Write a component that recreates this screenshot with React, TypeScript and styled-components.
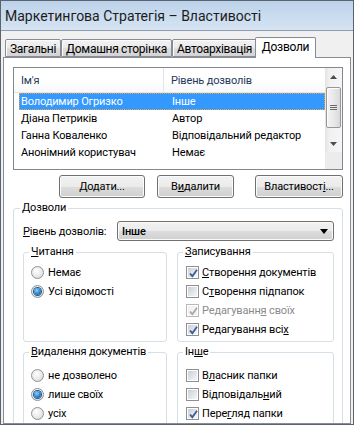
import React from "react";
import styled, { createGlobalStyle } from "styled-components";

const GlobalStyle = createGlobalStyle`
  html, body { margin: 0; padding: 0; background: #f0f0f0; }
  body { font-family: Roboto, "Noto Sans", sans-serif; font-size: 11px; letter-spacing: -0.15px; color: #000; }
  * { box-sizing: border-box; }
`;

const Window = styled.div`
  width: 354px;
  height: 425px;
  border: 1px solid #5b636c;
  background: #f0f0f0;
  display: flex;
  flex-direction: column;
  overflow: hidden;
`;

const TitleBar = styled.div`
  flex: none;
  height: 30px;
  padding-left: 4px;
  display: flex;
  align-items: center;
  background: linear-gradient(#bcd2ea, #d6e4f3);
  border-bottom: 1px solid #8d9cae;
  font-size: 14px;
  letter-spacing: 0;
  color: #1c1c1c;
  white-space: nowrap;
`;

const Body = styled.div`
  flex: 1;
  min-height: 0;
  display: flex;
  flex-direction: column;
  padding: 7px 2px 0 2px;
`;

const TabStrip = styled.div`
  display: flex;
  align-items: flex-end;
  height: 20px;
  padding-left: 2px;
  margin-bottom: -1px;
  position: relative;
  z-index: 1;
`;

const Tab = styled.div<{ $w: number; $active?: boolean }>`
  width: ${(p) => p.$w}px;
  height: ${(p) => (p.$active ? 21 : 18)}px;
  margin: ${(p) => (p.$active ? "0 -2px" : "0 0 1px 0")};
  border: 1px solid #898c95;
  border-bottom: ${(p) => (p.$active ? "none" : "1px solid #898c95")};
  border-radius: 2px 2px 0 0;
  background: ${(p) =>
    p.$active ? "#ffffff" : "linear-gradient(#f2f2f2, #ebebeb 45%, #dcdcdc 55%, #d4d4d4)"};
  box-shadow: inset 1px 1px 0 #fcfcfc;
  display: flex;
  align-items: ${(p) => (p.$active ? "flex-start" : "center")};
  padding-top: ${(p) => (p.$active ? 2 : 1)}px;
  justify-content: center;
  font-size: 12px;
  letter-spacing: -0.3px;
  white-space: nowrap;
  position: relative;
  z-index: ${(p) => (p.$active ? 2 : 1)};
`;

const Panel = styled.div`
  flex: 1;
  min-height: 0;
  overflow: hidden;
  background: #ffffff;
  border: 1px solid #898c95;
  padding: 9px 7px 0 9px;
  display: flex;
  flex-direction: column;
`;

const ListBox = styled.div`
  flex: none;
  height: 103px;
  border: 1px solid #828790;
  display: flex;
  background: #fff;
`;

const ListMain = styled.div`
  flex: 1;
  min-width: 0;
  display: flex;
  flex-direction: column;
`;

const Header = styled.div`
  display: grid;
  grid-template-columns: 150px 1fr;
  height: 25px;
  border-bottom: 1px solid #e2e4e8;
  background: linear-gradient(#ffffff, #ffffff 50%, #f7f8fa);
`;

const HeaderCell = styled.div<{ $divider?: boolean }>`
  display: flex;
  align-items: center;
  padding-left: 7px;
  color: #1e395b;
  border-right: ${(p) => (p.$divider ? "1px solid #e3e5e8" : "none")};
`;

const Row = styled.div<{ $selected?: boolean }>`
  display: grid;
  grid-template-columns: 144px 1fr;
  height: 17px;
  margin-left: 5px;
  align-items: center;
  white-space: nowrap;
  background: ${(p) => (p.$selected ? "#3399ff" : "transparent")};
  color: ${(p) => (p.$selected ? "#ffffff" : "#000000")};
  border: 1px ${(p) => (p.$selected ? "dotted #f0a23a" : "solid transparent")};
`;

const Cell = styled.div<{ $pad: number }>`
  padding-left: ${(p) => p.$pad}px;
  overflow: hidden;
`;

const ScrollBar = styled.div`
  flex: none;
  width: 17px;
  display: flex;
  flex-direction: column;
  background: linear-gradient(to right, #e3e3e3, #f0f0f0 25%, #f6f6f6);
`;

const ScrollButton = styled.div`
  flex: none;
  height: 17px;
  display: flex;
  align-items: center;
  justify-content: center;
`;

const ScrollTrack = styled.div`
  flex: 1;
  padding-top: 2px;
  display: flex;
  flex-direction: column;
  align-items: center;
`;

const Thumb = styled.div`
  width: 15px;
  height: 41px;
  border: 1px solid #979797;
  border-radius: 2px;
  background: linear-gradient(to right, #f4f4f4, #e9e9e9 50%, #d9d9d9);
  box-shadow: inset 1px 1px 0 #fdfdfd;
  display: flex;
  align-items: center;
  justify-content: center;
`;

const Corner = styled.div`
  flex: none;
  height: 17px;
  background: #ececec;
`;

const ButtonRow = styled.div`
  display: flex;
  justify-content: flex-end;
  margin-top: 5px;
`;

const Button = styled.div<{ $w: number; $ml: number }>`
  width: ${(p) => p.$w}px;
  height: 23px;
  margin-left: ${(p) => p.$ml}px;
  border: 1px solid #707070;
  border-radius: 3px;
  background: linear-gradient(#f2f2f2, #ebebeb 50%, #dddddd 50%, #cfcfcf);
  box-shadow: inset 0 0 0 1px #fbfbfb;
  display: flex;
  align-items: center;
  justify-content: center;
  white-space: nowrap;
`;

const Group = styled.fieldset<{ $mt: number }>`
  margin: ${(p) => p.$mt}px 0 0 0;
  padding: 0;
  min-width: 0;
  border: 1px solid #d5dfe5;
  border-radius: 3px;
`;

const Legend = styled.legend<{ $ml: number }>`
  margin-left: ${(p) => p.$ml}px;
  padding: 0 2px;
  line-height: 16px;
  white-space: nowrap;
`;

const GroupBody = styled.div<{ $pt: number; $pl: number; $pr: number; $pb: number }>`
  padding: ${(p) => `${p.$pt}px ${p.$pr}px ${p.$pb}px ${p.$pl}px`};
  display: flex;
  flex-direction: column;
`;

const LevelRow = styled.div`
  display: flex;
  align-items: center;
  justify-content: space-between;
  height: 20px;
  white-space: nowrap;
`;

const Select = styled.div`
  width: 217px;
  height: 20px;
  border: 1px solid #707070;
  border-radius: 3px;
  background: linear-gradient(#f2f2f2, #ebebeb 50%, #dddddd 50%, #cfcfcf);
  box-shadow: inset 0 0 0 1px #fbfbfb;
  display: flex;
  align-items: center;
  justify-content: space-between;
  padding: 0 5px 0 4px;
  font-weight: 500;
`;

const InnerGrid = styled.div`
  display: grid;
  grid-template-columns: 144px 157px;
  column-gap: 10px;
  row-gap: 2px;
  margin-top: 3px;
`;

const OptionRow = styled.div<{ $disabled?: boolean }>`
  display: flex;
  align-items: center;
  height: 19px;
  white-space: nowrap;
  color: ${(p) => (p.$disabled ? "#8a8a8a" : "#000")};
`;

const RadioCircle = styled.span<{ $on?: boolean }>`
  flex: none;
  width: 13px;
  height: 13px;
  margin-right: 4px;
  border-radius: 50%;
  border: 1px solid #8e9194;
  background: radial-gradient(circle at 40% 35%, #ffffff, #e6e6e6 60%, #cfcfcf);
  display: flex;
  align-items: center;
  justify-content: center;
  &::after {
    content: "";
    display: ${(p) => (p.$on ? "block" : "none")};
    width: 7px;
    height: 7px;
    border-radius: 50%;
    background: radial-gradient(circle at 40% 35%, #8fd2ff, #2a82c8 55%, #1b4f86);
    box-shadow: 0 0 0 1px #1e5b94;
  }
`;

const CheckBox = styled.span<{ $disabled?: boolean }>`
  flex: none;
  width: 13px;
  height: 13px;
  margin-right: 3px;
  border: 1px solid ${(p) => (p.$disabled ? "#b9b9b9" : "#8e8f8f")};
  background: #fff;
  padding: 1px;
  display: flex;
  &::before {
    content: "";
    flex: 1;
    background: ${(p) =>
      p.$disabled ? "#f2f2f2" : "linear-gradient(135deg, #cbcfd5, #f6f6f6)"};
  }
  position: relative;
`;

const CheckMark = styled.svg`
  position: absolute;
  left: 1px;
  top: 1px;
`;

const Text = styled.span`
  white-space: pre;
`;

const Ul = styled.span`
  text-decoration: underline;
`;

const Label: React.FC<{ text: string }> = ({ text }) => {
  const i = text.indexOf("&");
  if (i < 0) return <Text>{text}</Text>;
  return (
    <Text>
      {text.slice(0, i)}
      <Ul>{text[i + 1]}</Ul>
      {text.slice(i + 2)}
    </Text>
  );
};

const Radio: React.FC<{ text: string; on?: boolean }> = ({ text, on }) => (
  <OptionRow>
    <RadioCircle $on={on} />
    <Label text={text} />
  </OptionRow>
);

const Check: React.FC<{ text: string; on?: boolean; disabled?: boolean }> = ({ text, on, disabled }) => (
  <OptionRow $disabled={disabled}>
    <CheckBox $disabled={disabled}>
      {on && (
        <CheckMark width="11" height="11" viewBox="0 0 11 11">
          <path
            d="M2 5.5 L4.3 8.2 L9 1.8"
            fill="none"
            stroke={disabled ? "#a9a9a9" : "#3b5a9a"}
            strokeWidth="1.8"
          />
        </CheckMark>
      )}
    </CheckBox>
    <Label text={text} />
  </OptionRow>
);

const Arrow: React.FC<{ dir: "up" | "down"; color?: string; w?: number; h?: number }> = ({
  dir,
  color = "#4d4d4d",
  w = 7,
  h = 4,
}) => (
  <svg width={w} height={h} viewBox={`0 0 ${w} ${h}`}>
    <polygon
      points={dir === "up" ? `0,${h} ${w / 2},0 ${w},${h}` : `0,0 ${w},0 ${w / 2},${h}`}
      fill={color}
    />
  </svg>
);

const rows = [
  { name: "Володимир Огризко", level: "Інше", selected: true },
  { name: "Діана Петриків", level: "Автор" },
  { name: "Ганна Коваленко", level: "Відповідальний редактор" },
  { name: "Анонімний користувач", level: "Немає" },
];

export default function App() {
  return (
    <>
      <GlobalStyle />
      <Window>
        <TitleBar>Маркетингова Стратегія – Властивості</TitleBar>
        <Body>
          <TabStrip>
            <Tab $w={56}>Загальні</Tab>
            <Tab $w={111}>Домашня сторінка</Tab>
            <Tab $w={85}>Автоархівація</Tab>
            <Tab $w={61} $active>
              Дозволи
            </Tab>
          </TabStrip>
          <Panel>
            <ListBox>
              <ListMain>
                <Header>
                  <HeaderCell $divider>Ім'я</HeaderCell>
                  <HeaderCell>Рівень дозволів</HeaderCell>
                </Header>
                {rows.map((r) => (
                  <Row key={r.name} $selected={r.selected}>
                    <Cell $pad={1}>{r.name}</Cell>
                    <Cell $pad={8}>{r.level}</Cell>
                  </Row>
                ))}
              </ListMain>
              <ScrollBar>
                <ScrollButton>
                  <Arrow dir="up" />
                </ScrollButton>
                <ScrollTrack>
                  <Thumb>
                    <svg width="7" height="6" viewBox="0 0 7 6">
                      <path d="M0 0.5H7M0 2.5H7M0 4.5H7" stroke="#6b6b6b" strokeWidth="1" />
                    </svg>
                  </Thumb>
                </ScrollTrack>
                <ScrollButton>
                  <Arrow dir="down" />
                </ScrollButton>
                <Corner />
              </ScrollBar>
            </ListBox>

            <ButtonRow>
              <Button $w={86} $ml={0}>
                <Label text="&Додати..." />
              </Button>
              <Button $w={77} $ml={12}>
                <Label text="В&идалити" />
              </Button>
              <Button $w={88} $ml={21}>
                <Label text="Властивост&і..." />
              </Button>
            </ButtonRow>

            <Group $mt={2}>
              <Legend $ml={6}>Дозволи</Legend>
              <GroupBody $pt={5} $pl={9} $pr={8} $pb={0}>
                <LevelRow>
                  <Label text="&Рівень дозволів:" />
                  <Select>
                    <span>Інше</span>
                    <Arrow dir="down" color="#000" w={8} h={5} />
                  </Select>
                </LevelRow>
                <InnerGrid>
                  <Group $mt={0}>
                    <Legend $ml={5}>
                      <Label text="&Читання" />
                    </Legend>
                    <GroupBody $pt={3} $pl={7} $pr={4} $pb={2}>
                      <Radio text="Немає" />
                      <Radio text="Усі відомості" on />
                    </GroupBody>
                  </Group>
                  <Group $mt={0}>
                    <Legend $ml={5}>
                      <Label text="&Записування" />
                    </Legend>
                    <GroupBody $pt={3} $pl={8} $pr={4} $pb={2}>
                      <Check text="&Створення документів" on />
                      <Check text="С&творення підпапок" />
                      <Check text="Редагуванн&я своїх" on disabled />
                      <Check text="Редагування всі&х" on />
                    </GroupBody>
                  </Group>
                  <Group $mt={0}>
                    <Legend $ml={5}>
                      <Label text="&Видалення документів" />
                    </Legend>
                    <GroupBody $pt={6} $pl={7} $pr={4} $pb={4}>
                      <Radio text="не дозволено" />
                      <Radio text="лише своїх" on />
                      <Radio text="усіх" />
                    </GroupBody>
                  </Group>
                  <Group $mt={0}>
                    <Legend $ml={5}>
                      <Label text="Ін&ше" />
                    </Legend>
                    <GroupBody $pt={6} $pl={8} $pr={4} $pb={4}>
                      <Check text="В&ласник папки" />
                      <Check text="Відповідаль&ний" />
                      <Check text="Пере&гляд папки" on />
                    </GroupBody>
                  </Group>
                </InnerGrid>
              </GroupBody>
            </Group>
          </Panel>
        </Body>
      </Window>
    </>
  );
}
